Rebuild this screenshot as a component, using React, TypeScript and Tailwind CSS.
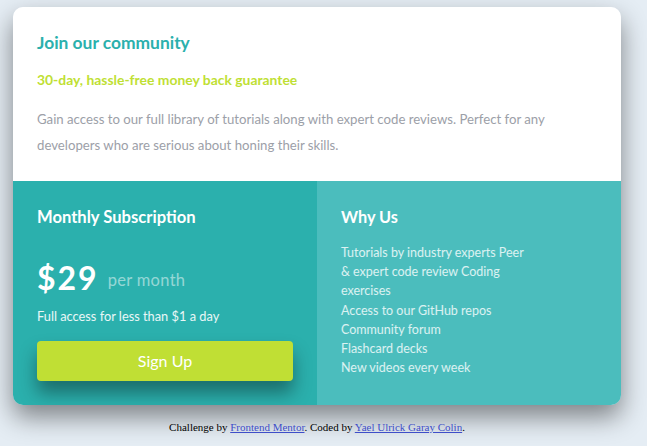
import React from "react";

export default function App() {
  const font = { fontFamily: "Lato, 'Open Sans', sans-serif" };
  return (
    <div className="min-h-[446px] bg-[#e5edf4] pt-[7px] pl-[13px]" style={font}>
      <div className="w-[608px] rounded-[10px] overflow-hidden shadow-[0_12px_26px_rgba(0,0,0,0.45)]">
        <div className="bg-white px-6 pt-6 pb-[23px]">
          <h1 className="text-[17.4px] leading-[24px] font-bold text-[#2bb0ad]">Join our community</h1>
          <h2 className="mt-[15px] text-[13.9px] leading-[20px] font-bold text-[#c0df34]">
            30-day, hassle-free money back guarantee
          </h2>
          <p className="mt-4 text-[13.2px] leading-[26px] text-[#9ca0a8] max-w-[540px]">
            Gain access to our full library of tutorials along with expert code reviews. Perfect for any developers who are serious about honing their skills.
          </p>
        </div>
        <div className="grid grid-cols-2">
          <div className="bg-[#2bb0ad] px-6 pt-6 pb-6">
            <h3 className="text-[16.6px] leading-[24px] font-bold text-white">Monthly Subscription</h3>
            <div className="mt-[29px] flex items-center h-[40px]">
              <span className="text-[32px] font-bold text-white leading-[40px] tracking-[2px]">$29</span>
              <span className="ml-[9px] text-[16.5px] text-white/50 leading-[40px] pt-[3px] tracking-[0.3px]">per month</span>
            </div>
            <p className="mt-2 text-[12.8px] leading-[20px] text-white/90">Full access for less than $1 a day</p>
            <button className="mt-[15px] w-full h-[40px] rounded-[4px] bg-[#c0df34] text-white text-[16px] shadow-[0_12px_18px_rgba(0,0,0,0.38)]">
              Sign Up
            </button>
          </div>
          <div className="bg-[#4bbdbd] px-6 pt-6 pb-6">
            <h3 className="text-[16.3px] leading-[24px] font-bold text-white">Why Us</h3>
            <ul className="mt-[14px] text-[12.5px] leading-[19.2px] text-white/80">
              <li className="max-w-[190px]">Tutorials by industry experts Peer &amp; expert code review Coding exercises</li>
              <li>Access to our GitHub repos</li>
              <li>Community forum</li>
              <li>Flashcard decks</li>
              <li>New videos every week</li>
            </ul>
          </div>
        </div>
      </div>
      <footer
        className="w-[608px] mt-[15px] text-center text-[11px] leading-[14px] text-black"
        style={{ fontFamily: "'Liberation Serif', serif" }}
      >
        Challenge by <a href="#" className="underline text-[#3e4ec9]">Frontend Mentor</a>. Coded by{" "}
        <a href="#" className="underline text-[#3e4ec9]">Yael Ulrick Garay Colin</a>.
      </footer>
    </div>
  );
}
